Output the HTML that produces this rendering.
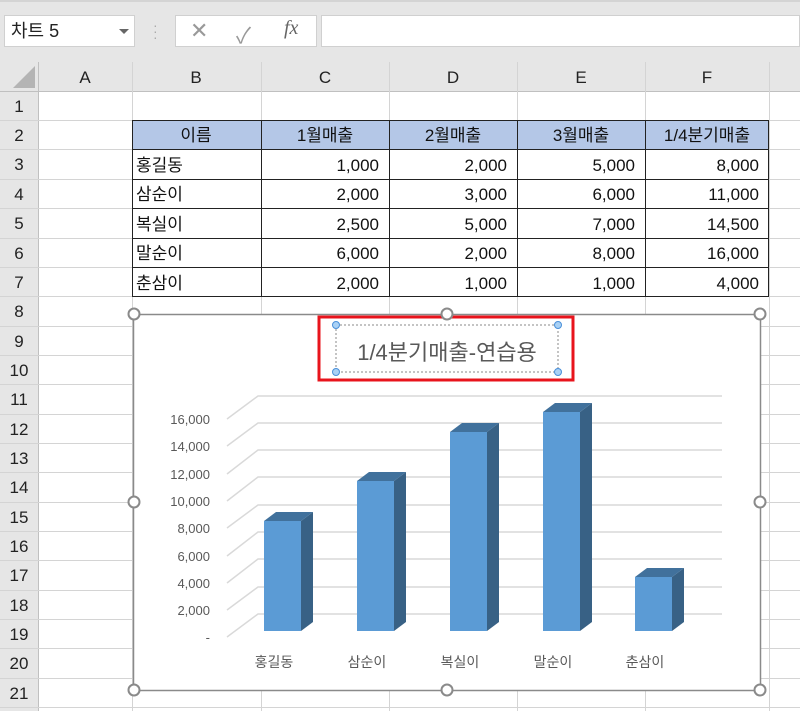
<!DOCTYPE html>
<html><head><meta charset="utf-8"><style>
body{margin:0;width:800px;height:711px;overflow:hidden;background:#fff;font-family:"Liberation Sans","Noto Sans CJK KR",sans-serif;position:relative}
.a{position:absolute}
</style></head><body>
<div class="a" style="left:0;top:0;width:800px;height:62px;background:#e6e6e6"></div>
<div class="a" style="left:0;top:0;width:800px;height:2px;background:#d4d4d4"></div>
<div class="a" style="left:4px;top:15px;width:131px;height:32px;background:#fff;border:1px solid #d0d0d0;box-sizing:border-box;font-size:18px;line-height:30px;padding-left:6px;color:#222">차트 5</div>
<div class="a" style="left:119px;top:29px;width:0;height:0;border-left:5px solid transparent;border-right:5px solid transparent;border-top:5px solid #666"></div>
<div class="a" style="left:153px;top:22px;color:#aaa;font-size:14px;line-height:6px">·<br>·<br>·</div>
<div class="a" style="left:175px;top:15px;width:142px;height:32px;background:#fff;border:1px solid #d0d0d0;box-sizing:border-box"></div>
<div class="a" style="left:190px;top:18px;color:#999;font-size:22px">✕</div>
<div class="a" style="left:236px;top:18px;color:#999;font-size:22px">✓</div>
<div class="a" style="left:284px;top:17px;color:#666;font-size:20px;font-style:italic;font-family:'Liberation Serif',serif">fx</div>
<div class="a" style="left:321px;top:15px;width:479px;height:32px;background:#fff;border:1px solid #d0d0d0;box-sizing:border-box"></div>
<svg class="a" style="left:0;top:0" width="800" height="711" font-family="Liberation Sans, Noto Sans CJK KR, sans-serif">
<rect x="0" y="62" width="800" height="29" fill="#e6e6e6"/>
<rect x="0" y="62" width="38" height="649" fill="#e6e6e6"/>
<polygon points="35,66 35,88 13,88" fill="#b4b4b4"/>
<g stroke="#d4d4d4" stroke-width="1">
<line x1="0" y1="91.5" x2="800" y2="91.5" stroke="#c0c0c0"/>
<line x1="38.5" y1="62" x2="38.5" y2="711" stroke="#c0c0c0"/>
<line x1="132.5" y1="62" x2="132.5" y2="711"/><line x1="261.5" y1="62" x2="261.5" y2="711"/>
<line x1="389.5" y1="62" x2="389.5" y2="711"/><line x1="517.5" y1="62" x2="517.5" y2="711"/>
<line x1="645.5" y1="62" x2="645.5" y2="711"/><line x1="769.5" y1="62" x2="769.5" y2="711"/>
<line x1="0" y1="120.5" x2="800" y2="120.5"/><line x1="0" y1="149.5" x2="800" y2="149.5"/>
<line x1="0" y1="179.5" x2="800" y2="179.5"/><line x1="0" y1="208.5" x2="800" y2="208.5"/>
<line x1="0" y1="238.5" x2="800" y2="238.5"/><line x1="0" y1="267.5" x2="800" y2="267.5"/>
<line x1="0" y1="296.5" x2="800" y2="296.5"/><line x1="0" y1="326.5" x2="800" y2="326.5"/>
<line x1="0" y1="355.5" x2="800" y2="355.5"/><line x1="0" y1="384.5" x2="800" y2="384.5"/>
<line x1="0" y1="414.5" x2="800" y2="414.5"/><line x1="0" y1="443.5" x2="800" y2="443.5"/>
<line x1="0" y1="472.5" x2="800" y2="472.5"/><line x1="0" y1="502.5" x2="800" y2="502.5"/>
<line x1="0" y1="531.5" x2="800" y2="531.5"/><line x1="0" y1="560.5" x2="800" y2="560.5"/>
<line x1="0" y1="590.5" x2="800" y2="590.5"/><line x1="0" y1="619.5" x2="800" y2="619.5"/>
<line x1="0" y1="648.5" x2="800" y2="648.5"/><line x1="0" y1="678.5" x2="800" y2="678.5"/>
<line x1="0" y1="707.5" x2="800" y2="707.5"/>
</g>
<g font-size="17" fill="#222" text-anchor="middle">
<text x="85" y="83">A</text><text x="196" y="83">B</text><text x="325" y="83">C</text><text x="453" y="83">D</text><text x="581" y="83">E</text><text x="707" y="83">F</text>
</g>
<g font-size="17" fill="#222" text-anchor="middle">
<text x="19" y="112">1</text><text x="19" y="141">2</text><text x="19" y="170">3</text><text x="19" y="200">4</text><text x="19" y="229">5</text><text x="19" y="259">6</text><text x="19" y="288">7</text><text x="19" y="317">8</text><text x="19" y="347">9</text><text x="19" y="376">10</text><text x="19" y="405">11</text><text x="19" y="435">12</text><text x="19" y="464">13</text><text x="19" y="493">14</text><text x="19" y="523">15</text><text x="19" y="552">16</text><text x="19" y="581">17</text><text x="19" y="611">18</text><text x="19" y="640">19</text><text x="19" y="669">20</text><text x="19" y="699">21</text>
</g>
<rect x="132.5" y="120.5" width="636" height="29" fill="#b4c7e7"/>
<g stroke="#222" fill="none"><rect x="132.5" y="120.5" width="636" height="176"/>
<line x1="261.5" y1="120" x2="261.5" y2="297"/><line x1="389.5" y1="120" x2="389.5" y2="297"/><line x1="517.5" y1="120" x2="517.5" y2="297"/><line x1="645.5" y1="120" x2="645.5" y2="297"/>
<line x1="132" y1="149.5" x2="769" y2="149.5"/><line x1="132" y1="179.5" x2="769" y2="179.5"/><line x1="132" y1="208.5" x2="769" y2="208.5"/><line x1="132" y1="238.5" x2="769" y2="238.5"/><line x1="132" y1="267.5" x2="769" y2="267.5"/></g>
<g font-size="17" fill="#111" text-anchor="middle"><text x="196" y="141">이름</text><text x="325" y="141">1월매출</text><text x="453" y="141">2월매출</text><text x="581" y="141">3월매출</text><text x="707" y="141">1/4분기매출</text></g>
<g font-size="17" fill="#111"><text x="136" y="171">홍길동</text><text x="136" y="200">삼순이</text><text x="136" y="230">복실이</text><text x="136" y="259">말순이</text><text x="136" y="289">춘삼이</text></g>
<g font-size="17" fill="#111" text-anchor="end">
<text x="379" y="171">1,000</text><text x="507" y="171">2,000</text><text x="635" y="171">5,000</text><text x="759" y="171">8,000</text>
<text x="379" y="200">2,000</text><text x="507" y="200">3,000</text><text x="635" y="200">6,000</text><text x="759" y="200">11,000</text>
<text x="379" y="230">2,500</text><text x="507" y="230">5,000</text><text x="635" y="230">7,000</text><text x="759" y="230">14,500</text>
<text x="379" y="259">6,000</text><text x="507" y="259">2,000</text><text x="635" y="259">8,000</text><text x="759" y="259">16,000</text>
<text x="379" y="289">2,000</text><text x="507" y="289">1,000</text><text x="635" y="289">1,000</text><text x="759" y="289">4,000</text>
</g>
<rect x="133.5" y="314.5" width="627" height="376" fill="#fff" stroke="#8a8a8a" stroke-width="1.5"/>
<g stroke="#d9d9d9" stroke-width="1.5" fill="none">
<path d="M227 419 L258 396 H722"/><path d="M227 446 L258 423 H722"/><path d="M227 474 L258 450 H722"/><path d="M227 501 L258 477 H722"/><path d="M227 528 L258 505 H722"/><path d="M227 556 L258 532 H722"/><path d="M227 583 L258 559 H722"/><path d="M227 610 L258 587 H722"/><path d="M227 637 L258 614 H722"/>
</g>
<g font-size="13" fill="#595959" text-anchor="end">
<text x="210" y="424">16,000</text><text x="210" y="451">14,000</text><text x="210" y="479">12,000</text><text x="210" y="506">10,000</text><text x="210" y="533">8,000</text><text x="210" y="561">6,000</text><text x="210" y="588">4,000</text><text x="210" y="615">2,000</text><text x="210" y="642">-</text>
</g>
<g>
<rect x="264" y="521" width="37" height="110" fill="#5b9bd5"/><polygon points="301,521 313,512 313,622 301,631" fill="#386185"/><polygon points="264,521 276,512 313,512 301,521" fill="#41719c"/>
<rect x="357" y="481" width="37" height="150" fill="#5b9bd5"/><polygon points="394,481 406,472 406,622 394,631" fill="#386185"/><polygon points="357,481 369,472 406,472 394,481" fill="#41719c"/>
<rect x="450" y="432" width="37" height="199" fill="#5b9bd5"/><polygon points="487,432 499,423 499,622 487,631" fill="#386185"/><polygon points="450,432 462,423 499,423 487,432" fill="#41719c"/>
<rect x="543" y="412" width="37" height="219" fill="#5b9bd5"/><polygon points="580,412 592,403 592,622 580,631" fill="#386185"/><polygon points="543,412 555,403 592,403 580,412" fill="#41719c"/>
<rect x="635" y="577" width="37" height="54" fill="#5b9bd5"/><polygon points="672,577 684,568 684,622 672,631" fill="#386185"/><polygon points="635,577 647,568 684,568 672,577" fill="#41719c"/>
</g>
<g font-size="14" fill="#595959" text-anchor="middle"><text x="274" y="667">홍길동</text><text x="367" y="667">삼순이</text><text x="460" y="667">복실이</text><text x="553" y="667">말순이</text><text x="645" y="667">춘삼이</text></g>
<rect x="319" y="317" width="254" height="63" fill="none" stroke="#e8141c" stroke-width="3"/>
<rect x="336" y="325" width="222" height="47" fill="none" stroke="#888" stroke-dasharray="2,2"/>
<text x="447" y="360" font-size="22" fill="#595959" text-anchor="middle">1/4분기매출-연습용</text>
<g fill="#a9d1f5" stroke="#4a90d9"><circle cx="336" cy="325" r="3.5"/><circle cx="558" cy="325" r="3.5"/><circle cx="336" cy="372" r="3.5"/><circle cx="558" cy="372" r="3.5"/></g>
<g fill="#fff" stroke="#8a8a8a" stroke-width="2"><circle cx="134" cy="314" r="5.5"/><circle cx="447" cy="314" r="5.5"/><circle cx="760" cy="314" r="5.5"/><circle cx="134" cy="502" r="5.5"/><circle cx="760" cy="502" r="5.5"/><circle cx="134" cy="690" r="5.5"/><circle cx="447" cy="690" r="5.5"/><circle cx="760" cy="690" r="5.5"/></g>
</svg>
</body></html>
